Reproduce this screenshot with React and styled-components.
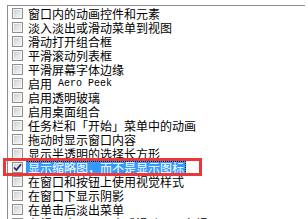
import React from 'react'
import styled, { createGlobalStyle } from 'styled-components'

const items = [
  '窗口内的动画控件和元素',
  '淡入淡出或滑动菜单到视图',
  '滑动打开组合框',
  '平滑滚动列表框',
  '平滑屏幕字体边缘',
  'AERO',
  '启用透明玻璃',
  '启用桌面组合',
  '任务栏和「开始」菜单中的动画',
  '拖动时显示窗口内容',
  '显示半透明的选择长方形',
  '显示缩略图，而不是显示图标',
  '在窗口和按钮上使用视觉样式',
  '在窗口下显示阴影',
  '在单击后淡出菜单',
  '在视图中淡入淡出或滑动工具条提示',
]

const SELECTED = 11

function App() {
  return (
    <Page>
      <GlobalStyle />
      <ListBox>
        {items.map((text, i) => (
          <Row key={i}>
            <CheckBox>
              {i === SELECTED && (
                <svg width="9" height="9" viewBox="0 0 9 9">
                  <path d="M1 4.5 L3.4 7 L8 1.2" fill="none" stroke="#1e2a6e" strokeWidth="1.8" />
                </svg>
              )}
            </CheckBox>
            <Label selected={i === SELECTED}>
              {text === 'AERO' ? (
                <>
                  启用<Latin>Aero Peek</Latin>
                </>
              ) : (
                text
              )}
            </Label>
          </Row>
        ))}
      </ListBox>
      <Marker />
    </Page>
  )
}

export default App

const GlobalStyle = createGlobalStyle`
  html, body {
    margin: 0;
    padding: 0;
    background: #ffffff;
    overflow: hidden;
  }
  body {
    font-family: "Noto Sans CJK SC", "DejaVu Sans", sans-serif;
    font-size: 12px;
    color: #000;
  }
`

const Page = styled.div`
  position: relative;
  width: 308px;
  height: 219px;
  overflow: hidden;
  padding-top: 5px;
  box-sizing: border-box;
`

const ListBox = styled.div`
  margin-left: 7px;
  width: 297px;
  border-top: 1px solid #8a8d93;
  border-left: 1px solid #8a8d93;
  display: flex;
  flex-direction: column;
`

const Row = styled.div`
  display: flex;
  align-items: flex-start;
  height: 14px;
`

const CheckBox = styled.span`
  box-sizing: border-box;
  width: 11px;
  height: 11px;
  margin: 2px 0 0 4px;
  border: 1px solid #8e8f8f;
  background: linear-gradient(135deg, #c8cacd 0%, #e4e5e7 55%, #f7f7f7 100%);
  box-shadow: inset 0 0 0 1px #f4f4f4;
  display: flex;
  align-items: center;
  justify-content: center;
  flex-shrink: 0;
`

const Label = styled.span`
  margin-left: 3px;
  margin-top: 1px;
  padding: 0 1px;
  height: 13px;
  line-height: 13px;
  box-sizing: border-box;
  border: 1px dotted ${p => (p.selected ? '#1a1a1a' : 'transparent')};
  border-left-color: ${p => (p.selected ? '#3399ff' : 'transparent')};
  background: ${p => (p.selected ? '#3399ff' : 'transparent')};
  color: ${p => (p.selected ? '#ffffff' : '#000000')};
  white-space: nowrap;
  display: flex;
  align-items: center;
  font-size: 12px;
`

const Latin = styled.span`
  font-family: "Liberation Mono", monospace;
  font-size: 10px;
  margin-left: 6px;
`

const Marker = styled.div`
  position: absolute;
  left: 3px;
  top: 158px;
  width: 199px;
  height: 18px;
  box-sizing: border-box;
  border: 3px solid #ee3636;
  pointer-events: none;
`
